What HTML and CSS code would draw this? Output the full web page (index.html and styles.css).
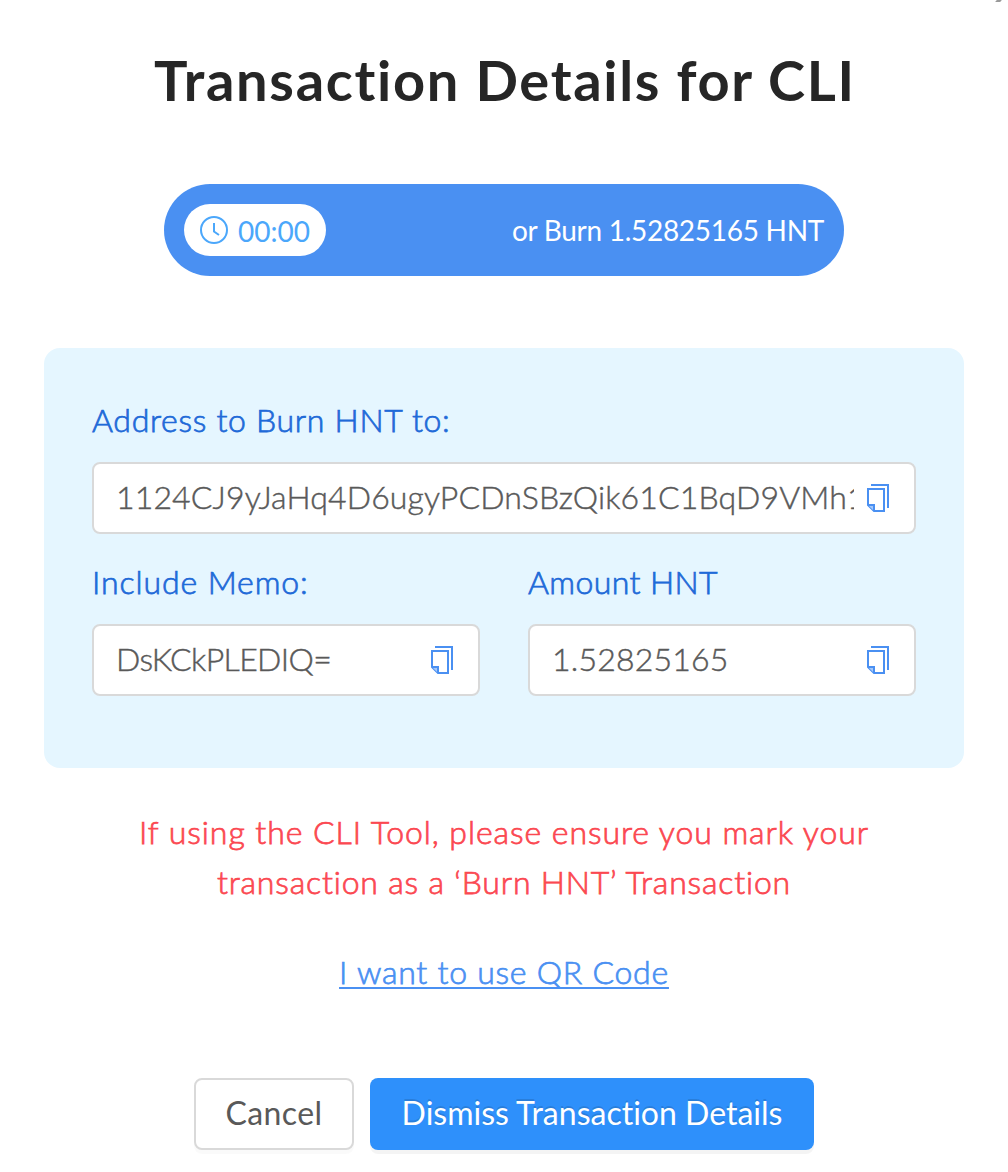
FILE: index.html
```html
<!DOCTYPE html>
<html lang="en">
<head>
<meta charset="utf-8">
<title>Transaction Details for CLI</title>
<link rel="stylesheet" href="styles.css">
</head>
<body>
<svg class="symbols" aria-hidden="true">
  <symbol id="copy" viewBox="0 0 24 28">
    <path d="M4 1H21V24M1 5H17V27H7L1 21Z" fill="none" stroke="#4a90f2" stroke-width="2"/>
    <path d="M1 21H7V27" fill="#a5c8f9" stroke="#4a90f2" stroke-width="2"/>
  </symbol>
</svg>
<main class="modal">
  <span class="close-edge"></span>
  <h1 class="title"><span>Transaction Details for CLI</span></h1>
  <div class="status">
    <div class="timer">
      <svg class="clock" viewBox="0 0 28 28" fill="none" stroke="#4ba7fb" stroke-width="2"><circle cx="14" cy="14" r="13"/><path d="M14 7V15.5L19 19"/></svg>
      <span class="time">00:00</span>
    </div>
    <span class="burn">or Burn 1.52825165 HNT</span>
  </div>
  <section class="panel">
    <div class="field wide">
      <div class="label"><span class="l-address">Address to Burn HNT to:</span></div>
      <div class="input"><span class="value v-address">1124CJ9yJaHq4D6ugyPCDnSBzQik61C1BqD9VMh1</span><svg class="copy"><use href="#copy"/></svg></div>
    </div>
    <div class="field">
      <div class="label"><span class="l-memo">Include Memo:</span></div>
      <div class="input"><span class="value v-memo">DsKCkPLEDIQ=</span><svg class="copy"><use href="#copy"/></svg></div>
    </div>
    <div class="field">
      <div class="label"><span class="l-amount">Amount HNT</span></div>
      <div class="input"><span class="value v-amount">1.52825165</span><svg class="copy"><use href="#copy"/></svg></div>
    </div>
  </section>
  <p class="warning"><span class="w-first">If using the CLI Tool, please ensure you mark your</span><br><span class="w-second">transaction as a ‘Burn HNT’ Transaction</span></p>
  <a class="link">I want to use QR Code</a>
  <div class="actions">
    <button class="button cancel"><span>Cancel</span></button>
    <button class="button dismiss"><span>Dismiss Transaction Details</span></button>
  </div>
</main>
</body>
</html>
```

FILE: styles.css
```css
* { box-sizing: border-box; }
body { margin: 0; background: #fff; font-family: Lato, "Open Sans", sans-serif; font-size: 32px; font-variant-ligatures: none; }
.symbols { position: absolute; width: 0; height: 0; }
.modal { position: relative; height: 1172px; padding: 44px 44px 0; overflow: hidden; display: flex; flex-direction: column; align-items: center; }
.close-edge { position: absolute; top: 0; left: 996px; width: 5px; height: 2px; background: #999; transform: skewX(-40deg); }
.title { margin: 0; height: 72px; padding-left: 2px; line-height: 71px; font-size: 56px; font-weight: 700; letter-spacing: 1.7px; color: #262626; white-space: nowrap; }
.status { width: 680px; height: 92px; margin-top: 68px; padding: 20px; border-radius: 46px; background: #4a90f2; display: flex; align-items: center; justify-content: space-between; color: #fff; font-size: 28px; white-space: nowrap; }
.burn { letter-spacing: -.28px; }
.timer { width: 142px; height: 52px; padding-left: 16px; border-radius: 26px; background: #fff; display: flex; align-items: center; gap: 10px; color: #4ba7fb; }
.time { padding-top: 2px; }
.clock { width: 28px; height: 28px; }
.panel { width: 920px; height: 420px; margin-top: 72px; padding: 48px; border-radius: 16px; background: #e5f6ff; display: grid; grid-template-columns: 1fr 1fr; grid-template-rows: 138px 138px; gap: 24px 48px; }
.wide { grid-column: 1 / 3; }
.field { min-width: 0; }
.label, .warning, .link { font-weight: 300; -webkit-text-stroke: .75px currentColor; }
.label { height: 50px; line-height: 47px; margin-bottom: 16px; color: #1f6ad8; white-space: nowrap; letter-spacing: .9px; }
.l-address { letter-spacing: .7px; }
.l-amount { letter-spacing: .4px; }
.input { height: 72px; padding: 0 23px 0 22px; border: 2px solid #d9d9d9; border-radius: 8px; background: #fff; display: flex; align-items: center; justify-content: space-between; color: #595959; }
.value { overflow: hidden; white-space: nowrap; font-weight: 300; padding-bottom: 4px; -webkit-text-stroke: .45px currentColor; }
.v-address { width: 738px; letter-spacing: .14px; }
.v-memo { letter-spacing: -.6px; }
.v-amount { letter-spacing: .2px; }
.copy { width: 24px; height: 28px; flex: none; }
.warning { margin: 39px 0 0; line-height: 50px; text-align: center; color: #fb4851; white-space: nowrap; }
.w-first { letter-spacing: .94px; }
.w-second { letter-spacing: .82px; }
.link { margin-top: 40px; line-height: 49px; color: #4a90f2; text-decoration: underline; text-decoration-thickness: 2px; text-decoration-skip-ink: none; text-underline-offset: 3px; white-space: nowrap; letter-spacing: .75px; }
.actions { display: flex; gap: 16px; margin-top: 82px; }
.button { height: 72px; padding: 0 0 4px; border-radius: 8px; font: 400 32px Lato, sans-serif; font-variant-ligatures: none; white-space: nowrap; }
.cancel { width: 160px; border: 2px solid #d9d9d9; background: #fff; color: #595959; box-shadow: 0 4px 0 rgba(0,0,0,.02); letter-spacing: .4px; }
.dismiss { width: 444px; border: 0; background: #2e90fb; color: #fff; box-shadow: 0 4px 0 rgba(0,0,0,.045); text-shadow: 0 -2px 0 rgba(0,0,0,.12); }
```
